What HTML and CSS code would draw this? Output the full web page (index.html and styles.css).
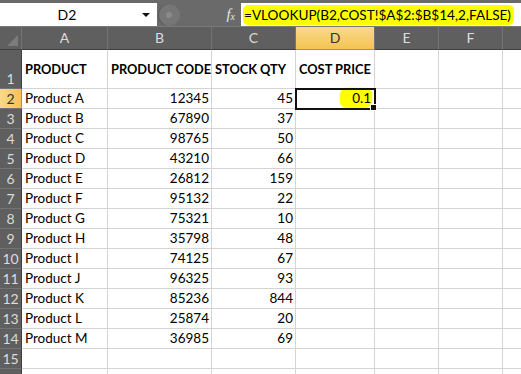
FILE: index.html
```html
<!DOCTYPE html>
<html>
<head>
<meta charset="utf-8">
<link rel="stylesheet" href="styles.css">
</head>
<body>
<div class="topbar">
  <div class="namebox"><span class="nb-text">D2</span><span class="nb-arrow"></span></div>
  <div class="btns">
    <span class="round"><span class="dot"></span></span>
    <span class="fx">f<sub>x</sub></span>
  </div>
  <div class="formula"><span class="hl">=VLOOKUP(B2,COST!$A$2:$B$14,2,FALSE)</span></div>
</div>
<div class="sheet">
  <div class="ch corner"><span class="tri"></span></div>
  <div class="ch">A</div><div class="ch">B</div><div class="ch">C</div><div class="ch sel">D</div><div class="ch">E</div><div class="ch">F</div><div class="ch last"></div>

  <div class="rh tall">1</div>
  <div class="c b tallc">PRODUCT</div><div class="c b tallc">PRODUCT CODE</div><div class="c b tallc">STOCK QTY</div><div class="c b tallc">COST PRICE</div><div class="c tallc"></div><div class="c tallc"></div><div class="c tallc last"></div>

  <div class="rh rsel">2</div>
  <div class="c">Product A</div><div class="c r">12345</div><div class="c r">45</div><div class="c r active"><span class="mark">0.1</span><span class="handle"></span></div><div class="c"></div><div class="c"></div><div class="c last"></div>

  <div class="rh">3</div><div class="c">Product B</div><div class="c r">67890</div><div class="c r">37</div><div class="c"></div><div class="c"></div><div class="c"></div><div class="c last"></div>
  <div class="rh">4</div><div class="c">Product C</div><div class="c r">98765</div><div class="c r">50</div><div class="c"></div><div class="c"></div><div class="c"></div><div class="c last"></div>
  <div class="rh">5</div><div class="c">Product D</div><div class="c r">43210</div><div class="c r">66</div><div class="c"></div><div class="c"></div><div class="c"></div><div class="c last"></div>
  <div class="rh">6</div><div class="c">Product E</div><div class="c r">26812</div><div class="c r">159</div><div class="c"></div><div class="c"></div><div class="c"></div><div class="c last"></div>
  <div class="rh">7</div><div class="c">Product F</div><div class="c r">95132</div><div class="c r">22</div><div class="c"></div><div class="c"></div><div class="c"></div><div class="c last"></div>
  <div class="rh">8</div><div class="c">Product G</div><div class="c r">75321</div><div class="c r">10</div><div class="c"></div><div class="c"></div><div class="c"></div><div class="c last"></div>
  <div class="rh">9</div><div class="c">Product H</div><div class="c r">35798</div><div class="c r">48</div><div class="c"></div><div class="c"></div><div class="c"></div><div class="c last"></div>
  <div class="rh">10</div><div class="c">Product I</div><div class="c r">74125</div><div class="c r">67</div><div class="c"></div><div class="c"></div><div class="c"></div><div class="c last"></div>
  <div class="rh">11</div><div class="c">Product J</div><div class="c r">96325</div><div class="c r">93</div><div class="c"></div><div class="c"></div><div class="c"></div><div class="c last"></div>
  <div class="rh">12</div><div class="c">Product K</div><div class="c r">85236</div><div class="c r">844</div><div class="c"></div><div class="c"></div><div class="c"></div><div class="c last"></div>
  <div class="rh">13</div><div class="c">Product L</div><div class="c r">25874</div><div class="c r">20</div><div class="c"></div><div class="c"></div><div class="c"></div><div class="c last"></div>
  <div class="rh">14</div><div class="c">Product M</div><div class="c r">36985</div><div class="c r">69</div><div class="c"></div><div class="c"></div><div class="c"></div><div class="c last"></div>
  <div class="rh">15</div><div class="c"></div><div class="c"></div><div class="c"></div><div class="c"></div><div class="c"></div><div class="c"></div><div class="c last"></div>
  <div class="rh"></div><div class="c"></div><div class="c"></div><div class="c"></div><div class="c"></div><div class="c"></div><div class="c"></div><div class="c last"></div>
</div>
</body>
</html>
```

FILE: styles.css
```css
html, body {
  margin: 0;
  padding: 0;
  background: #ffffff;
  overflow: hidden;
}
body {
  width: 521px;
  height: 374px;
  font-family: Lato, "Open Sans", sans-serif;
  font-size: 13.5px;
  color: #000;
}
.topbar {
  height: 27px;
  background: #6a6a6a;
  display: flex;
  align-items: flex-start;
  padding-top: 3px;
  box-sizing: border-box;
  border-bottom: 1px solid #7a7a7a;
}
.namebox {
  flex: 0 0 157px;
  height: 23px;
  background: #fff;
  display: flex;
  align-items: center;
}
.nb-text {
  width: 134px;
  text-align: center;
  font-size: 14px;
}
.nb-arrow {
  width: 0;
  height: 0;
  border-left: 4px solid transparent;
  border-right: 4px solid transparent;
  border-top: 4px solid #111;
  margin-left: 8px;
}
.btns {
  flex: 0 0 84px;
  height: 23px;
  display: flex;
  align-items: center;
}
.round {
  width: 22px;
  height: 22px;
  border-radius: 50%;
  background: #767676;
  margin-left: 1px;
  display: flex;
  align-items: center;
  justify-content: center;
  box-shadow: inset 1px 0 0 #555;
}
.dot {
  width: 6px;
  height: 6px;
  border-radius: 50%;
  background: #8a8a8a;
}
.fx {
  margin-left: auto;
  margin-right: 6px;
  font-family: "Liberation Serif", serif;
  font-style: italic;
  color: #e6e6e6;
  font-size: 15px;
}
.fx sub {
  font-size: 10px;
  vertical-align: -1px;
}
.formula {
  flex: 1;
  height: 23px;
  background: #fff;
  display: flex;
  align-items: center;
  padding-left: 2px;
}
.hl {
  background: #ffff00;
  border-radius: 5px;
  padding: 2px 3px 2px 1px;
  font-size: 13.6px;
}
.sheet {
  display: grid;
  grid-template-columns: 22px 86px 104px 84px 79px 64px 64px 18px;
  grid-template-rows: 23px 39px repeat(15, 20px);
}
.ch {
  background: #5f5f5f;
  color: #dcdcdc;
  text-align: center;
  font-size: 14px;
  line-height: 22px;
  border-right: 1px solid #747474;
  border-bottom: 1px solid #3f3f3f;
  box-sizing: border-box;
}
.ch.sel {
  background: linear-gradient(#f9d98b, #f5c451);
  color: #333;
  border-bottom-color: #c28d25;
}
.ch.last { border-right: none; }
.corner {
  position: relative;
}
.tri {
  position: absolute;
  right: 3px;
  bottom: 3px;
  width: 0;
  height: 0;
  border-left: 11px solid transparent;
  border-bottom: 11px solid #7c7c7c;
}
.rh {
  background: #5f5f5f;
  color: #dcdcdc;
  font-size: 14px;
  line-height: 19px;
  border-bottom: 1px solid #747474;
  border-right: 1px solid #3f3f3f;
  box-sizing: border-box;
  display: flex;
  align-items: flex-end;
  justify-content: center;
}
.rh.rsel {
  background: linear-gradient(90deg, #f9d98b, #f5c451);
  color: #333;
  border-right-color: #c28d25;
}
.c {
  border-right: 1px solid #d4d4d4;
  border-bottom: 1px solid #d4d4d4;
  box-sizing: border-box;
  padding: 0 2px 0 3px;
  line-height: 19px;
  white-space: nowrap;
  position: relative;
}
.c.last { border-right: none; }
.b {
  font-weight: bold;
  font-size: 12.8px;
}
.tallc {
  display: flex;
  align-items: center;
}
.r {
  text-align: right;
}
.active {
  outline: 2px solid #111;
  outline-offset: -1px;
  z-index: 2;
}
.mark {
  background: #ffff00;
  border-radius: 7px;
  padding: 2px 1px 2px 12px;
  box-shadow: 0 0 2px #ffff00;
}
.handle {
  position: absolute;
  right: -3px;
  bottom: -3px;
  width: 5px;
  height: 5px;
  background: #111;
  border: 1px solid #fff;
}
```
